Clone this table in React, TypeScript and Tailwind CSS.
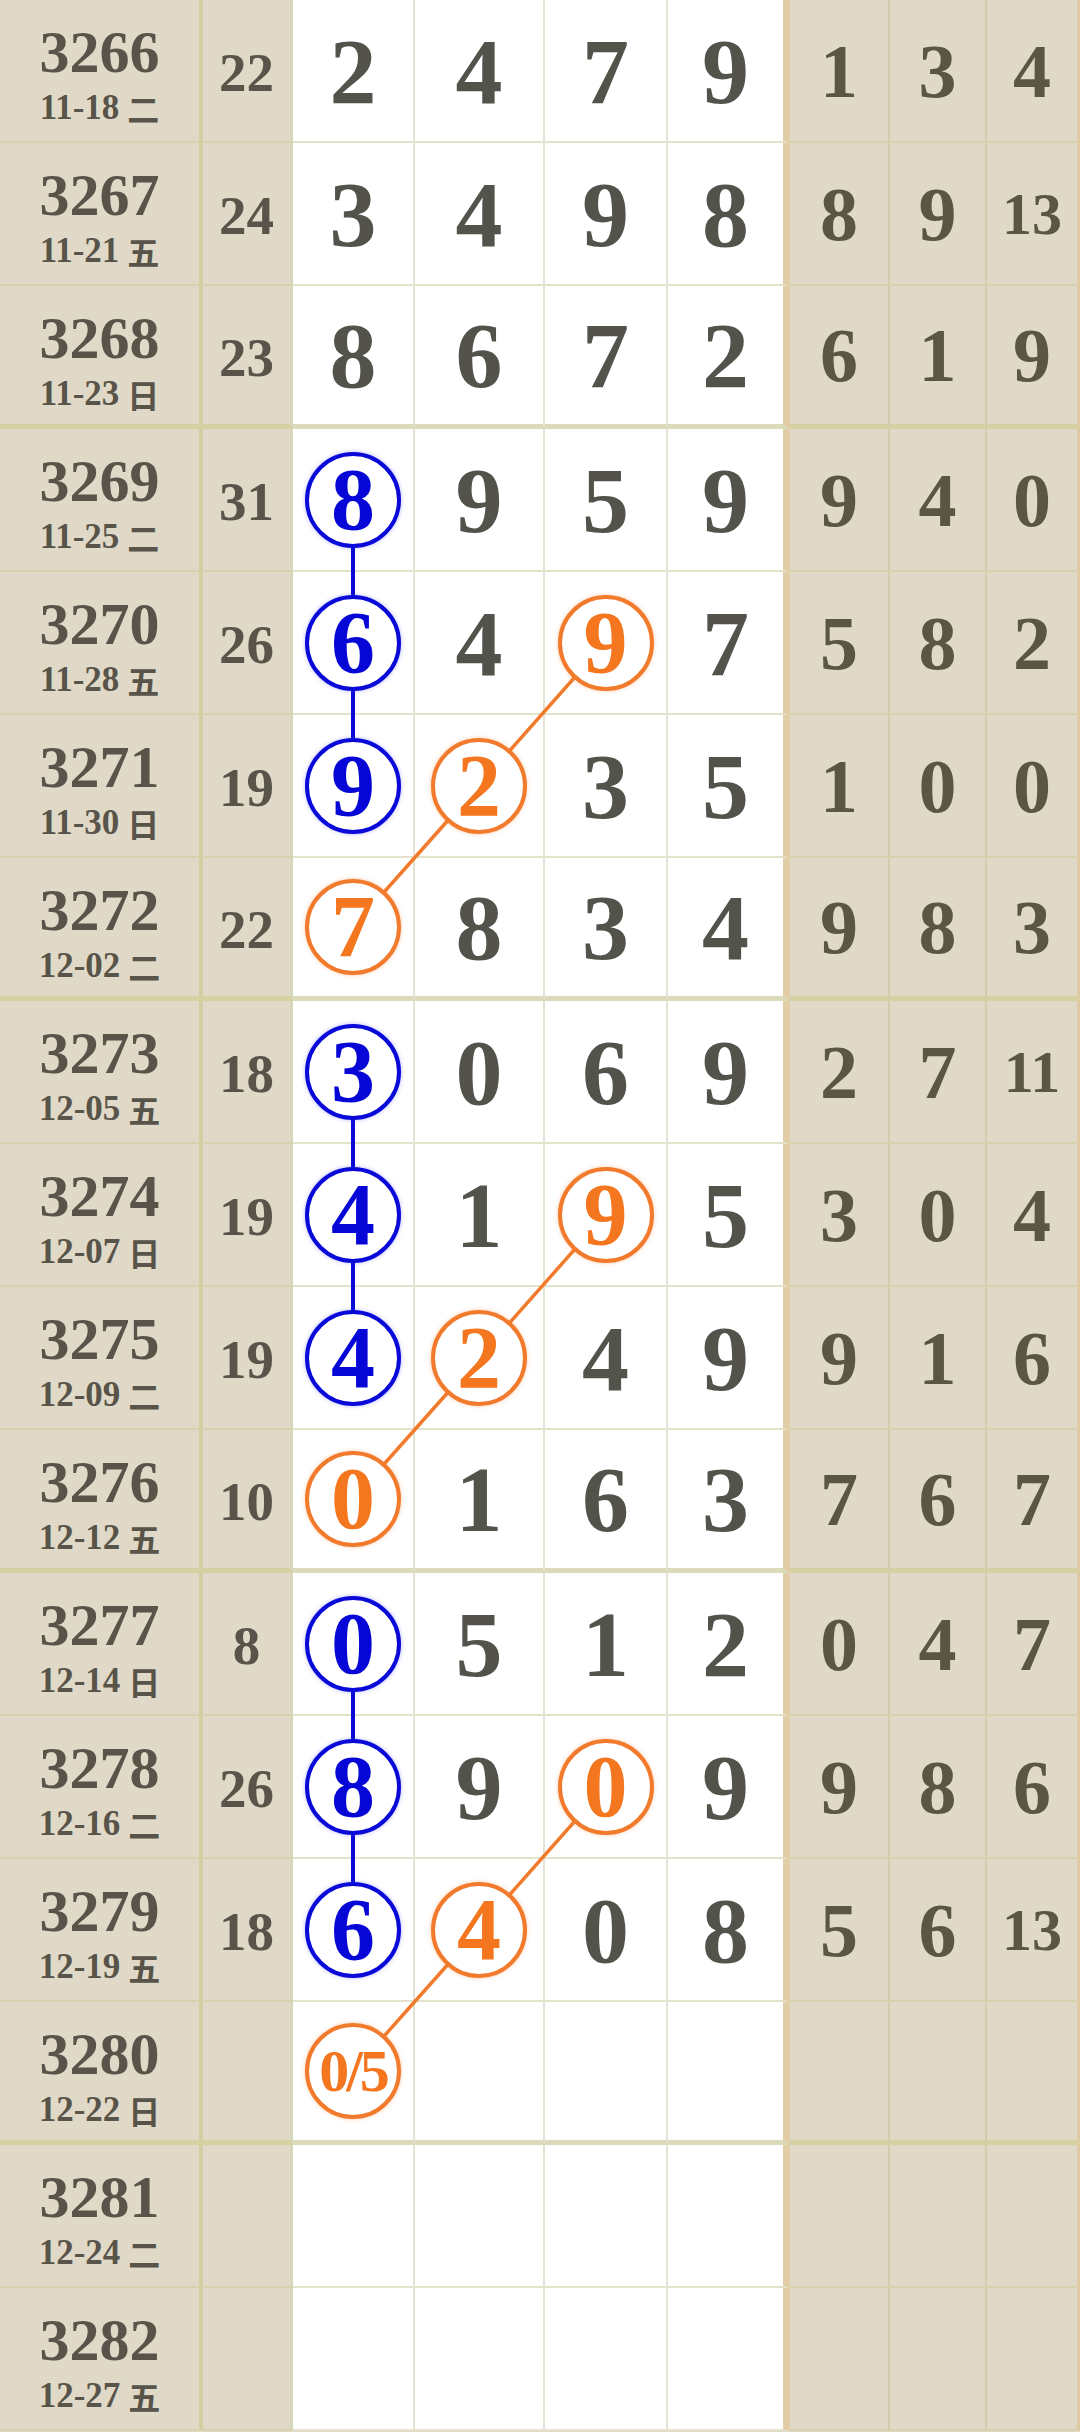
type Mark = 'b' | 'o'

type Row = {
  issue: string
  date: string
  week: string
  sum?: string
  main: string[]
  tail: string[]
  marks?: Record<number, Mark>
}

const rows: Row[] = [
  { issue: '3266', date: '11-18', week: '二', sum: '22', main: ['2', '4', '7', '9'], tail: ['1', '3', '4'] },
  { issue: '3267', date: '11-21', week: '五', sum: '24', main: ['3', '4', '9', '8'], tail: ['8', '9', '13'] },
  { issue: '3268', date: '11-23', week: '日', sum: '23', main: ['8', '6', '7', '2'], tail: ['6', '1', '9'] },
  { issue: '3269', date: '11-25', week: '二', sum: '31', main: ['8', '9', '5', '9'], tail: ['9', '4', '0'], marks: { 0: 'b' } },
  { issue: '3270', date: '11-28', week: '五', sum: '26', main: ['6', '4', '9', '7'], tail: ['5', '8', '2'], marks: { 0: 'b', 2: 'o' } },
  { issue: '3271', date: '11-30', week: '日', sum: '19', main: ['9', '2', '3', '5'], tail: ['1', '0', '0'], marks: { 0: 'b', 1: 'o' } },
  { issue: '3272', date: '12-02', week: '二', sum: '22', main: ['7', '8', '3', '4'], tail: ['9', '8', '3'], marks: { 0: 'o' } },
  { issue: '3273', date: '12-05', week: '五', sum: '18', main: ['3', '0', '6', '9'], tail: ['2', '7', '11'], marks: { 0: 'b' } },
  { issue: '3274', date: '12-07', week: '日', sum: '19', main: ['4', '1', '9', '5'], tail: ['3', '0', '4'], marks: { 0: 'b', 2: 'o' } },
  { issue: '3275', date: '12-09', week: '二', sum: '19', main: ['4', '2', '4', '9'], tail: ['9', '1', '6'], marks: { 0: 'b', 1: 'o' } },
  { issue: '3276', date: '12-12', week: '五', sum: '10', main: ['0', '1', '6', '3'], tail: ['7', '6', '7'], marks: { 0: 'o' } },
  { issue: '3277', date: '12-14', week: '日', sum: '8', main: ['0', '5', '1', '2'], tail: ['0', '4', '7'], marks: { 0: 'b' } },
  { issue: '3278', date: '12-16', week: '二', sum: '26', main: ['8', '9', '0', '9'], tail: ['9', '8', '6'], marks: { 0: 'b', 2: 'o' } },
  { issue: '3279', date: '12-19', week: '五', sum: '18', main: ['6', '4', '0', '8'], tail: ['5', '6', '13'], marks: { 0: 'b', 1: 'o' } },
  { issue: '3280', date: '12-22', week: '日', main: ['0/5', '', '', ''], tail: ['', '', ''], marks: { 0: 'o' } },
  { issue: '3281', date: '12-24', week: '二', main: ['', '', '', ''], tail: ['', '', ''] },
  { issue: '3282', date: '12-27', week: '五', main: ['', '', '', ''], tail: ['', '', ''] },
]

const ROW_H = 143
const colX = [353, 479, 605.5]
const isThick = (i: number) => i === 2 || i === 6 || i === 10 || i === 14
const cy = (i: number) => i * ROW_H + (ROW_H - (isThick(i) ? 5 : 2)) / 2

// blue runs straight down the first column, orange steps diagonally
const blueRuns = [[3, 5], [7, 9], [11, 13]]
const orangeRuns = [[4, 5, 6], [8, 9, 10], [12, 13, 14]]

const Circle = ({ value, mark }: { value: string; mark: Mark }) => {
  const small = value.length > 1
  return (
    <div
      className={
        mark === 'b'
          ? 'relative z-10 flex h-[96px] w-[96px] items-center justify-center rounded-full border-[4px] border-[#0a0ad8] bg-white text-[#0606d6] shadow-[0_0_4px_rgba(40,40,255,0.35)]'
          : 'relative z-10 flex h-[96px] w-[96px] items-center justify-center rounded-full border-[4px] border-[#f27a2c] bg-white text-[#f47720] shadow-[0_0_4px_rgba(245,130,50,0.4)]'
      }
    >
      <span className={small ? 'text-[60px] leading-none tracking-[-3px]' : 'text-[88px] leading-none'}>{value}</span>
    </div>
  )
}

export default function App() {
  return (
    <div className="relative w-[1080px] h-[2432px] overflow-hidden bg-[#e0d9c7] font-['Liberation_Serif',serif] font-bold">
      {/* trend lines */}
      <svg className="pointer-events-none absolute left-0 top-0" width={1080} height={2432}>
        {blueRuns.map(([a, b]) => (
          <line key={`b${a}`} x1={colX[0]} y1={cy(a)} x2={colX[0]} y2={cy(b)} stroke="#0a0ad8" strokeWidth={4} />
        ))}
        {orangeRuns.map(([a, b, c]) => (
          <polyline
            key={`o${a}`}
            points={`${colX[2]},${cy(a)} ${colX[1]},${cy(b)} ${colX[0]},${cy(c)}`}
            fill="none"
            stroke="#f27a2c"
            strokeWidth={3.5}
          />
        ))}
      </svg>

      {rows.map((row, i) => {
        const thick = isThick(i)
        const tanB = thick ? 'border-b-[5px] border-b-[#d6d0a2]' : 'border-b-2 border-b-[#d9d1ae]'
        const whiteB = thick ? 'border-b-[5px] border-b-[#dcdbb9]' : 'border-b-2 border-b-[#e3e2cb]'
        return (
          <div key={row.issue} className="grid h-[143px] grid-cols-[203px_90px_122px_130px_123px_122px_100px_97px_93px]">
            {/* issue + date */}
            <div className={`flex flex-col items-center bg-[#e0d9c7] pt-[22px] text-[#58544a] border-r-4 border-r-[#d4cfa3] ${tanB}`}>
              <div className="text-[60px] leading-none">{row.issue}</div>
              <div className="mt-[8px] flex h-[35px] items-center text-[35px] leading-none">
                <span>{row.date}</span>
                <span className="ml-[8px] font-['Noto_Sans_CJK_SC',sans-serif] text-[32px]">{row.week}</span>
              </div>
            </div>

            {/* sum */}
            <div className={`flex items-center justify-center bg-[#e0d9c7] pt-[4px] text-[55px] leading-none text-[#58544a] border-r-[3px] border-r-[#d5d8bd] ${tanB}`}>
              {row.sum}
            </div>

            {/* draw digits */}
            {row.main.map((d, j) => (
              <div
                key={j}
                className={`flex items-center justify-center bg-white text-[94px] leading-none text-[#53534c] ${
                  j === 3 ? 'border-r-[7px] border-r-[#e3cda6]' : 'border-r-2 border-r-[#e3e3d3]'
                } ${whiteB}`}
              >
                {row.marks && row.marks[j] ? <Circle value={d} mark={row.marks[j]} /> : d}
              </div>
            ))}

            {/* tail numbers */}
            {row.tail.map((d, j) => (
              <div
                key={j}
                className={`flex items-center justify-center bg-[#e0d9c7] leading-none text-[#5a5545] ${
                  d.length > 1 ? 'text-[60px]' : 'text-[76px]'
                } ${j === 2 ? 'border-r-[3px] border-r-[#dfcaa5]' : 'border-r-2 border-r-[#d3cbae]'} ${tanB}`}
              >
                {d}
              </div>
            ))}
          </div>
        )
      })}
    </div>
  )
}
